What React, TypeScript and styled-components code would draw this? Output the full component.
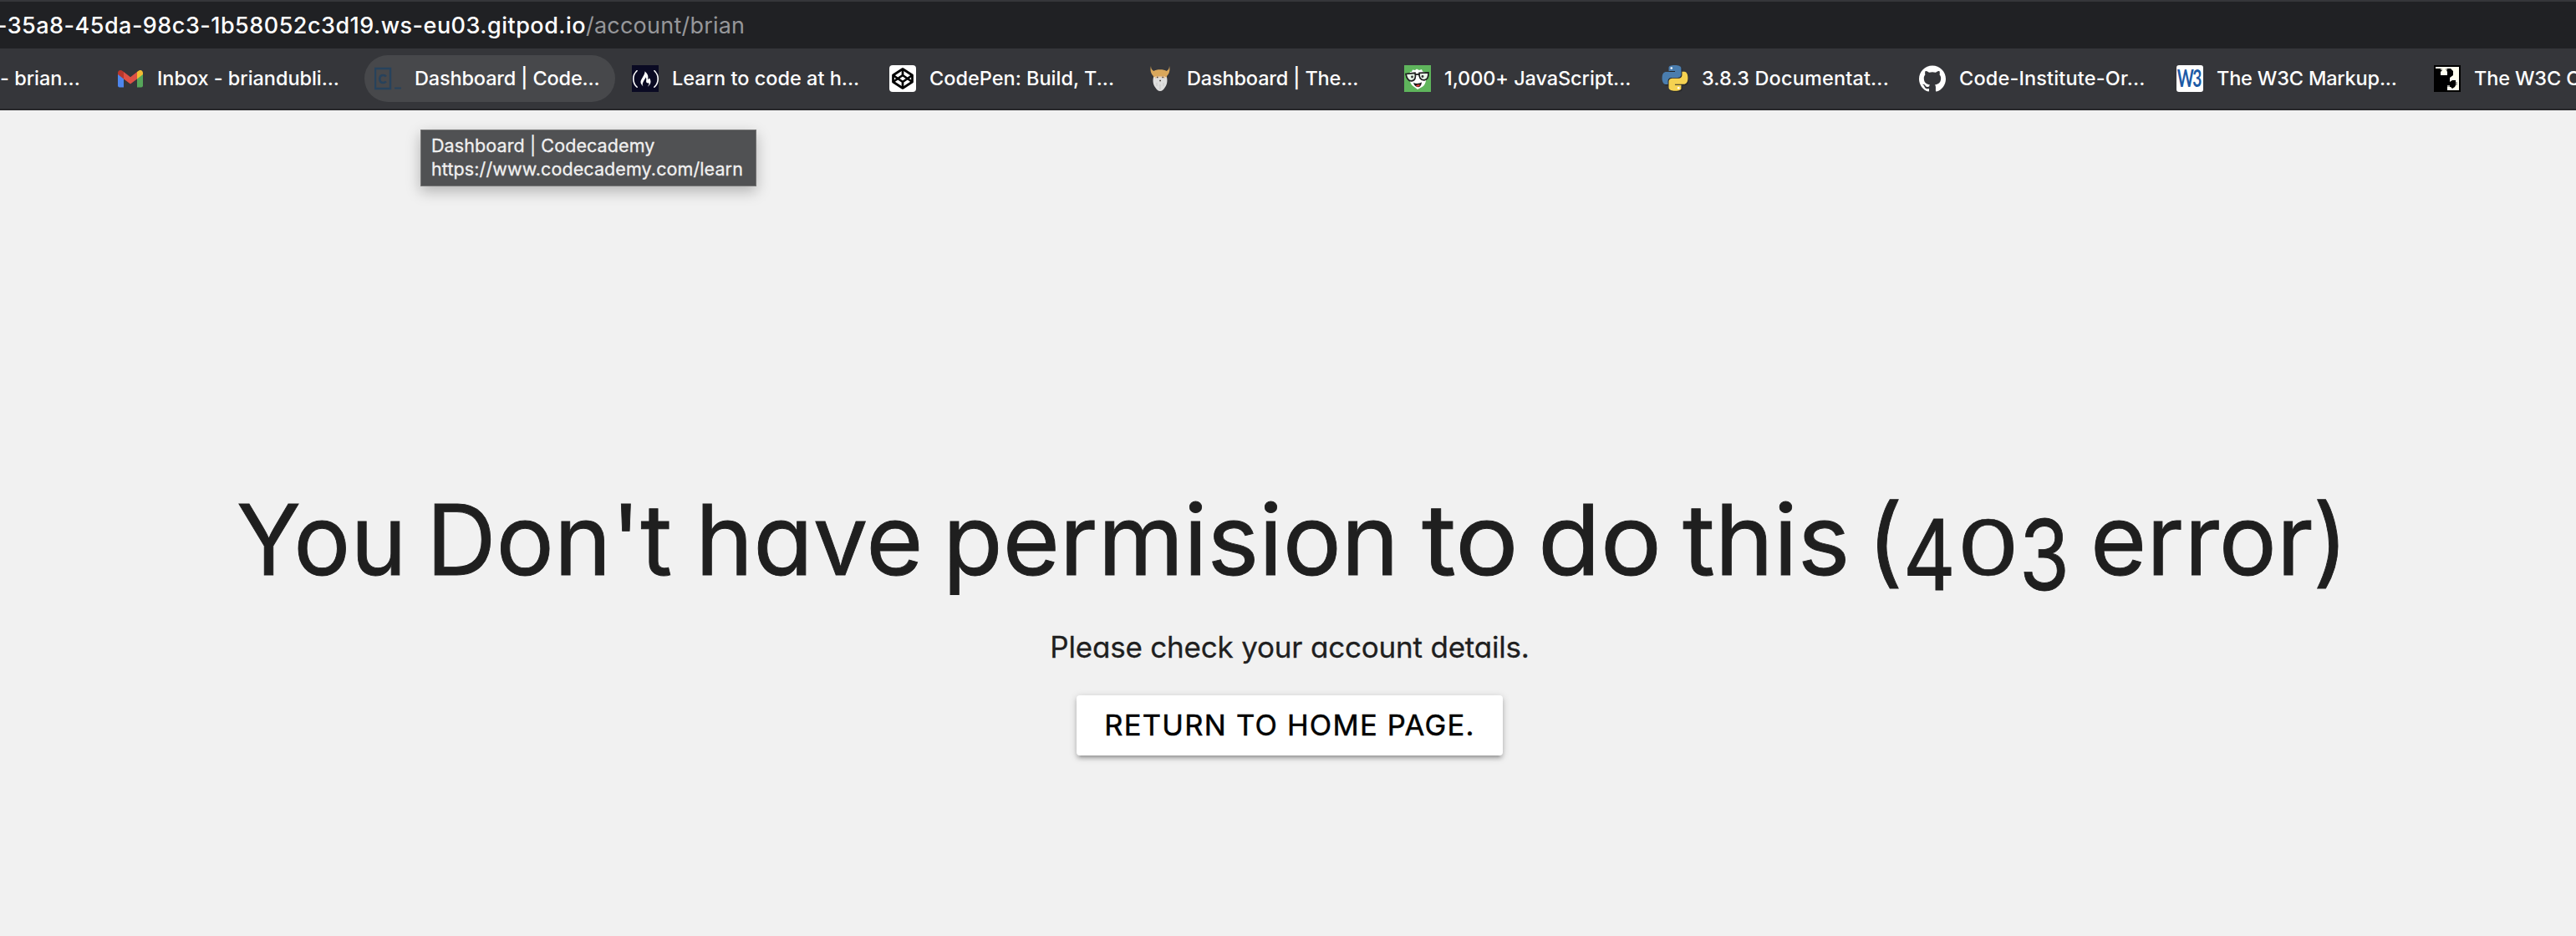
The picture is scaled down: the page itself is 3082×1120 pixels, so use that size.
import React from "react";
import styled, { createGlobalStyle } from "styled-components";
import { SiFreecodecamp, SiGithub } from "react-icons/si";

const GlobalStyle = createGlobalStyle`
  * { box-sizing: border-box; }
  body { margin: 0; background: #f1f1f1; font-family: Inter, "Liberation Sans", sans-serif; }
`;

const Screen = styled.div`
  width: 100%;
  height: 1120px;
  overflow: hidden;
  display: flex;
  flex-direction: column;
  background: #f1f1f1;
`;

const AddressBar = styled.div`
  flex: none;
  height: 58px;
  border-top: 2px solid #35363a;
  background: #202124;
  color: #fff;
  font-size: 27px;
  line-height: 57px;
  white-space: nowrap;
`;

const Host = styled.span`
  display: inline-block;
  margin-left: -4px;
  width: 705px;
  font-weight: 500;
  letter-spacing: 0.48px;
`;

const Path = styled.span`
  color: #96979a;
  letter-spacing: 0.22px;
`;

const BookmarkBar = styled.nav`
  flex: none;
  height: 74px;
  display: flex;
  align-items: flex-start;
  gap: 8px;
  padding-top: 8px;
  background: #35363a;
  border-bottom: 2px solid #27272a;
  overflow: hidden;
`;

const Bookmark = styled.div<{ $active?: boolean; $width?: number; $ls?: number }>`
  flex: none;
  width: ${(p) => p.$width ?? 300}px;
  height: 56px;
  display: flex;
  align-items: center;
  gap: 16px;
  padding-left: ${(p) => (p.$width ? 0 : 12)}px;
  border-radius: 28px;
  background: ${(p) => (p.$active ? "#47484b" : "transparent")};
  color: #fff;
  font-size: 23.5px;
  font-weight: 500;
  letter-spacing: ${(p) => p.$ls ?? 0}px;
  line-height: 56px;
  white-space: nowrap;
`;

const Favicon = styled.span<{ $bg?: string; $radius?: number; $color?: string }>`
  flex: none;
  width: 32px;
  height: 32px;
  display: flex;
  align-items: center;
  justify-content: center;
  background: ${(p) => p.$bg ?? "transparent"};
  border-radius: ${(p) => p.$radius ?? 0}px;
  color: ${(p) => p.$color ?? "#fff"};
  line-height: 1;
`;

const W3Mark = styled.span`
  font-family: Lato, sans-serif;
  font-weight: 700;
  font-size: 28px;
  letter-spacing: -2px;
  margin: -2px 0 0 -2px;
  transform: scaleX(0.68);
`;

const Page = styled.main`
  position: relative;
  flex: 1;
  display: flex;
  flex-direction: column;
  color: #1f1f1f;
  font-feature-settings: "cv11";
`;

const Tooltip = styled.div`
  position: absolute;
  left: 503px;
  top: 23px;
  width: 402px;
  height: 68px;
  padding: 4px 0 0 12px;
  background: #505153;
  border: 1px solid #747474;
  box-shadow: 0 6px 16px rgba(0, 0, 0, 0.26);
  color: #f0f0f0;
  font-size: 21.5px;
  font-weight: 400;
  letter-spacing: 0.1px;
  line-height: 28px;
  white-space: nowrap;
  font-feature-settings: normal;
  -webkit-text-stroke: 0.3px #f0f0f0;
`;

const Heading = styled.h1`
  margin: 439px 0 0;
  padding-left: 283px;
  display: flex;
  height: 150px;
  font-size: 117px;
  font-weight: 400;
  line-height: 150px;
  white-space: nowrap;
  -webkit-text-stroke: 0.9px #1f1f1f;
`;

const Word = styled.span<{ $w: number; $sx?: number }>`
  flex: none;
  width: ${(p) => p.$w}px;
  transform: scaleX(${(p) => p.$sx ?? 1});
  transform-origin: 0 50%;
`;

const Digit = styled.span<{ $w: number; $sx?: number; $sy?: number; $drop?: number }>`
  display: inline-block;
  width: ${(p) => p.$w}px;
  transform: translateY(${(p) => p.$drop ?? 0}px) scale(${(p) => p.$sx ?? 1}, ${(p) => p.$sy ?? 1});
  transform-origin: 0 117px;
`;

const Message = styled.p`
  margin: 27px 0 0;
  height: 58px;
  text-align: center;
  font-size: 35px;
  font-weight: 400;
  letter-spacing: -0.2px;
  line-height: 52px;
  padding-left: 4px;
  -webkit-text-stroke: 0.3px #1f1f1f;
`;

const HomeButton = styled.button`
  align-self: center;
  margin: 26px 0 0 4px;
  width: 510px;
  height: 72px;
  padding: 0;
  border: 0;
  border-radius: 4px;
  background: #fff;
  color: #000;
  font: 400 34.5px/72px Inter, "Liberation Sans", sans-serif;
  letter-spacing: 1.25px;
  -webkit-text-stroke: 0.5px #000;
  box-shadow: 0 4px 4px rgba(0, 0, 0, 0.14), 0 6px 2px -4px rgba(0, 0, 0, 0.12), 0 2px 10px rgba(0, 0, 0, 0.2);
`;

const GmailIcon = () => (
  <svg width="32" height="32" viewBox="0 0 32 32">
    <path d="M1 10v14.500a2 2 0 0 0 2 2h5V14.500z" fill="#4e86ec" />
    <path d="M31 10v14.500a2 2 0 0 1-2 2h-5V14.500z" fill="#56a65a" />
    <path d="M24 8l1-.8c3-2.600 6-1 6 2V11l-7 5.400z" fill="#f2bc33" />
    <path d="M8 8l-1-.8c-3-2.600-6-1-6 2V11l7 5.400z" fill="#b8372c" />
    <path d="M8 8l8 6.300L24 8v8.400l-8 6.200-8-6.200z" fill="#de5145" />
  </svg>
);

const CodecademyIcon = () => (
  <svg width="32" height="32" viewBox="0 0 32 32">
    <path d="M1 4h18v24H1z" fill="none" stroke="#27425c" strokeWidth="2.400" />
    <path d="M14 13.500c-1-1.200-2.300-1.500-3.700-1.500C7.700 12 6.300 14 6.300 16.500S7.700 21 10.300 21c1.400 0 2.700-.4 3.700-1.500" fill="none" stroke="#27425c" strokeWidth="2.600" />
    <path d="M24 26.500h8v2h-8z" fill="#27425c" />
  </svg>
);

const CodepenIcon = () => (
  <svg width="32" height="32" viewBox="0 0 32 32" fill="none" stroke="#000" strokeWidth="2.700" strokeLinejoin="round">
    <path d="M16 4.500L27.500 12v8L16 27.500 4.500 20v-8z" />
    <path d="M16 4.500V12M16 20v7.500M4.500 12L16 20l11.500-8M4.500 20L16 12l11.500 8" />
  </svg>
);

const VikingIcon = () => (
  <svg width="32" height="32" viewBox="0 0 32 32">
    <path d="M5 1c0 3 1 5 3.500 6C11 4.500 21 4.500 23.500 7 26 6 27 4 27 1c1.300 5-.2 9.500-3 12v4H8v-4C5.200 10.500 3.700 6 5 1z" fill="#d9a75b" />
    <path d="M8 14.500c5-1.700 11-1.700 16 0 1.200 5 0 9.500-2.500 12.500-1.200 2-3 4-5.500 4s-4.300-2-5.500-4C8 24 6.800 19.500 8 14.500z" fill="#dededd" />
    <path d="M10 13h12v3l-3-1.500h-6L10 16z" fill="#e3bd91" />
    <path d="M12 14.500h1.500M18.500 14.500H20M15.200 18.500h1.800" stroke="#4c4038" strokeWidth="1.500" />
    <path d="M12 21v4M20 21v4M16 23v6" stroke="#c3c3c3" strokeWidth=".8" />
  </svg>
);

const FaceIcon = () => (
  <svg width="32" height="32" viewBox="0 0 32 32">
    <path d="M6 12l1-4 2 0 1-2.500L13 6l2-1.500L18 6l3-1 1 2.500 3 1 1.500 4.500c0 7-2 12-6 13.500L16 29l-4-3c-4-2-6-7-6-14z" fill="#fff" />
    <path d="M2 10.500l11-1.200c1.200 5.200.2 9-4.500 9.500C4.300 19 3 15.500 2 10.500zM18 9.300L29 8.800c.2 5-.6 8.700-5 9-4.800.2-6.300-3.400-6-8.500zM13 11.500c2-1 3.500-1 5 0" fill="#e8f4e8" stroke="#1f1f1f" strokeWidth="1.700" />
    <circle cx="9.500" cy="14" r="1.400" fill="#333" />
    <circle cx="22" cy="13.500" r="1.400" fill="#333" />
    <path d="M11 21c3.500 1.500 7.500 1 10-.8-.4 4-2 6-4.500 6S12 24.300 11 21z" fill="#171717" />
    <path d="M14 24.500c1.200-1.300 3.500-1.500 5-.8-.8 2-3.500 2.900-5 .8z" fill="#df3f38" />
  </svg>
);

const SNAKE =
  "M14.25.18l.9.2.73.26.59.3.45.32.34.34.25.34.16.33.1.3.04.26.02.2-.01.13V8.500l-.05.63-.13.55-.21.46-.26.38-.3.31-.33.25-.35.19-.35.14-.33.1-.3.07-.26.04-.21.02H8.770l-.69.05-.59.14-.5.22-.41.27-.33.32-.27.35-.2.36-.15.37-.1.35-.07.32-.04.27-.02.21v3.060H3.170l-.21-.03-.28-.07-.32-.12-.35-.18-.36-.26-.36-.36-.35-.46-.32-.59-.28-.73-.21-.88-.14-1.050-.05-1.230.06-1.220.16-1.040.24-.87.32-.71.36-.57.4-.44.42-.33.42-.24.4-.16.36-.1.32-.05.24-.01h.16l.06.01h8.160v-.83H6.180l-.01-2.750-.02-.37.05-.34.11-.31.17-.28.25-.26.31-.23.38-.2.44-.18.51-.15.58-.12.64-.1.71-.06.77-.04.84-.02 1.270.05z";

const PythonIcon = () => (
  <svg width="32" height="32" viewBox="-0.5 0 25 25">
    <g transform="translate(.8 1)" opacity=".3">
      <path d={SNAKE} />
      <path d={SNAKE} transform="rotate(180 12 12)" />
    </g>
    <path d={SNAKE} fill="#4a7dae" />
    <path d={SNAKE} fill="#f5d251" transform="rotate(180 12 12)" />
    <circle cx="8.700" cy="2.700" r="1" fill="#fff" />
    <circle cx="15.300" cy="21.300" r="1" fill="#fff" />
  </svg>
);

const PixelIcon = () => (
  <svg width="32" height="32" viewBox="0 0 32 32">
    <path d="M2 2H30V30H16V26H20L22 28 25 26 26 24V18H22L19 20V15L23 12V7L20 4H15V6L16 8V12H8V8L10 6 8 4H2Z" fill="#fffff0" />
    <path d="M26 20h2v4h-2zM16 24h3v2h-3zM14 4h2v2h-2zM8 4h2v2H8z" fill="#a5a5a0" />
  </svg>
);

export default function App() {
  return (
    <Screen>
      <GlobalStyle />
      <AddressBar>
        <Host>-35a8-45da-98c3-1b58052c3d19.ws-eu03.gitpod.io</Host>
        <Path>/account/brian</Path>
      </AddressBar>
      <BookmarkBar>
        <Bookmark $width={120}>- brian...</Bookmark>
        <Bookmark $ls={-0.05}>
          <Favicon><GmailIcon /></Favicon>
          Inbox - briandubli...
        </Bookmark>
        <Bookmark $active $ls={-0.15}>
          <Favicon><CodecademyIcon /></Favicon>
          Dashboard | Code...
        </Bookmark>
        <Bookmark>
          <Favicon $bg="#0a0a23"><SiFreecodecamp size={31} /></Favicon>
          Learn to code at h...
        </Bookmark>
        <Bookmark>
          <Favicon $bg="#fff" $radius={4}><CodepenIcon /></Favicon>
          CodePen: Build, T...
        </Bookmark>
        <Bookmark $ls={-0.15}>
          <Favicon><VikingIcon /></Favicon>
          Dashboard | The...
        </Bookmark>
        <Bookmark $ls={-0.08}>
          <Favicon $bg="#5fb55c"><FaceIcon /></Favicon>
          1,000+ JavaScript...
        </Bookmark>
        <Bookmark $ls={0.15}>
          <Favicon><PythonIcon /></Favicon>
          3.8.3 Documentat...
        </Bookmark>
        <Bookmark $ls={0.16}>
          <Favicon><SiGithub size={32} /></Favicon>
          Code-Institute-Or...
        </Bookmark>
        <Bookmark $ls={-0.18}>
          <Favicon $bg="#fff" $radius={3} $color="#1d5aa6"><W3Mark>W3</W3Mark></Favicon>
          The W3C Markup...
        </Bookmark>
        <Bookmark $ls={-0.15}>
          <Favicon $bg="#000"><PixelIcon /></Favicon>
          The W3C CSS Validation...
        </Bookmark>
      </BookmarkBar>
      <Page>
        <Tooltip>
          Dashboard | Codecademy
          <br />
          https://www.codecademy.com/learn
        </Tooltip>
        <Heading>
          <Word $w={227} $sx={0.97}>You</Word>
          <Word $w={322} $sx={0.99}>Don't</Word>
          <Word $w={296}>have</Word>
          <Word $w={573}>permision</Word>
          <Word $w={139} $sx={1.08}>to</Word>
          <Word $w={173} $sx={1.045}>do</Word>
          <Word $w={221} $sx={1.015}>this</Word>
          <Word $w={267}>
            (<Digit $w={65} $sx={0.83} $drop={18}>4</Digit>
            <Digit $w={74} $sy={0.77}>0</Digit>
            <Digit $w={60} $sx={0.83} $drop={18}>3</Digit>
          </Word>
          <Word $w={300} $sx={0.985}>error)</Word>
        </Heading>
        <Message>Please check your account details.</Message>
        <HomeButton>RETURN TO HOME PAGE.</HomeButton>
      </Page>
    </Screen>
  );
}
